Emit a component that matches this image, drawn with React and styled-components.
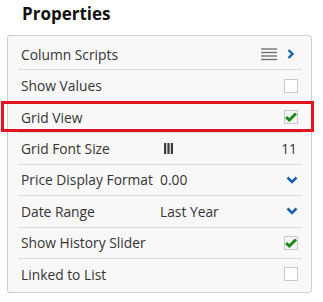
import React from "react";
import styled, { createGlobalStyle } from "styled-components";

const Global = createGlobalStyle`
  html, body { margin: 0; padding: 0; background: #fff; }
  body { font-family: "Open Sans", "Liberation Sans", sans-serif; color: #353535; }
`;

const Page = styled.div`
  width: 323px;
  padding: 0 11px 0 7px;
  box-sizing: border-box;
`;

const Title = styled.h2`
  margin: 0 0 7px 15px;
  height: 28px;
  line-height: 28px;
  font-size: 17px;
  font-weight: 700;
  color: #111;
`;

const Panel = styled.div`
  background: #f8f8f8;
  border: 1px solid #cfcfcf;
  border-radius: 3px;
  padding: 3px 0;
`;

const Row = styled.div`
  position: relative;
  height: 30.43px;
  margin: 0 9px 0 10px;
  padding: 0 4px 0 3px;
  display: grid;
  grid-template-columns: 139px 1fr auto;
  align-items: center;
  font-size: 13.8px;
  border-bottom: ${(p) => (p.$last ? "none" : "1px solid #dcdcdc")};

  ${(p) =>
    p.$highlight &&
    `
    &::after {
      content: "";
      position: absolute;
      left: -17px;
      right: -12px;
      top: -1px;
      bottom: 0px;
      border: 3px solid #e4141e;
      pointer-events: none;
    }
  `}
`;

const Label = styled.span`
  white-space: nowrap;
`;

const Value = styled.span`
  display: flex;
  align-items: center;
  white-space: nowrap;
`;

const Actions = styled.span`
  display: flex;
  align-items: center;
  gap: 10px;
  justify-self: end;
`;

const Box = styled.span`
  width: 12px;
  height: 12px;
  border: 1px solid #c9c9c9;
  background: ${(p) => (p.$checked ? "#f4f4f4" : "#fff")};
  display: flex;
  align-items: center;
  justify-content: center;
`;

const Number = styled.span`
  margin-right: 1px;
`;

const Menu = () => (
  <svg width="16" height="13" viewBox="0 0 16 13">
    {[1, 4.5, 8, 11.5].map((y) => (
      <line key={y} x1="0" x2="16" y1={y} y2={y} stroke="#6a6a6a" strokeWidth="1.3" />
    ))}
  </svg>
);

const ChevronRight = () => (
  <svg width="11" height="10" viewBox="0 0 11 10">
    <path d="M1.5 1 L5.5 5 L1.5 9" fill="none" stroke="#1463b8" strokeWidth="2.4" />
  </svg>
);

const ChevronDown = () => (
  <svg width="12" height="8" viewBox="0 0 12 8">
    <path d="M1.5 1.5 L6 6 L10.5 1.5" fill="none" stroke="#1463b8" strokeWidth="2.6" />
  </svg>
);

const Check = () => (
  <svg width="12" height="10" viewBox="0 0 12 10">
    <path d="M1 5 L4.3 8 L11 1.5" fill="none" stroke="#1a8a1a" strokeWidth="3" />
  </svg>
);

const Bars = () => (
  <svg width="9" height="11" viewBox="0 0 9 11" style={{ marginLeft: 4 }}>
    <rect x="0" y="0" width="2.2" height="11" fill="#3c3c3c" />
    <rect x="3.4" y="0" width="2.2" height="11" fill="#3c3c3c" />
    <rect x="6.8" y="0" width="2.2" height="11" fill="#3c3c3c" />
  </svg>
);

const CheckBox = ({ checked }) => <Box $checked={checked}>{checked && <Check />}</Box>;

export default function App() {
  return (
    <>
      <Global />
      <Page>
        <Title>Properties</Title>
        <Panel>
          <Row>
            <Label>Column Scripts</Label>
            <Value />
            <Actions>
              <Menu />
              <ChevronRight />
            </Actions>
          </Row>
          <Row>
            <Label>Show Values</Label>
            <Value />
            <Actions>
              <CheckBox />
            </Actions>
          </Row>
          <Row $highlight>
            <Label>Grid View</Label>
            <Value />
            <Actions>
              <CheckBox checked />
            </Actions>
          </Row>
          <Row>
            <Label>Grid Font Size</Label>
            <Value>
              <Bars />
            </Value>
            <Actions>
              <Number>11</Number>
            </Actions>
          </Row>
          <Row>
            <Label>Price Display Format</Label>
            <Value>0.00</Value>
            <Actions>
              <ChevronDown />
            </Actions>
          </Row>
          <Row>
            <Label>Date Range</Label>
            <Value>Last Year</Value>
            <Actions>
              <ChevronDown />
            </Actions>
          </Row>
          <Row>
            <Label>Show History Slider</Label>
            <Value />
            <Actions>
              <CheckBox checked />
            </Actions>
          </Row>
          <Row $last>
            <Label>Linked to List</Label>
            <Value />
            <Actions>
              <CheckBox />
            </Actions>
          </Row>
        </Panel>
      </Page>
    </>
  );
}
